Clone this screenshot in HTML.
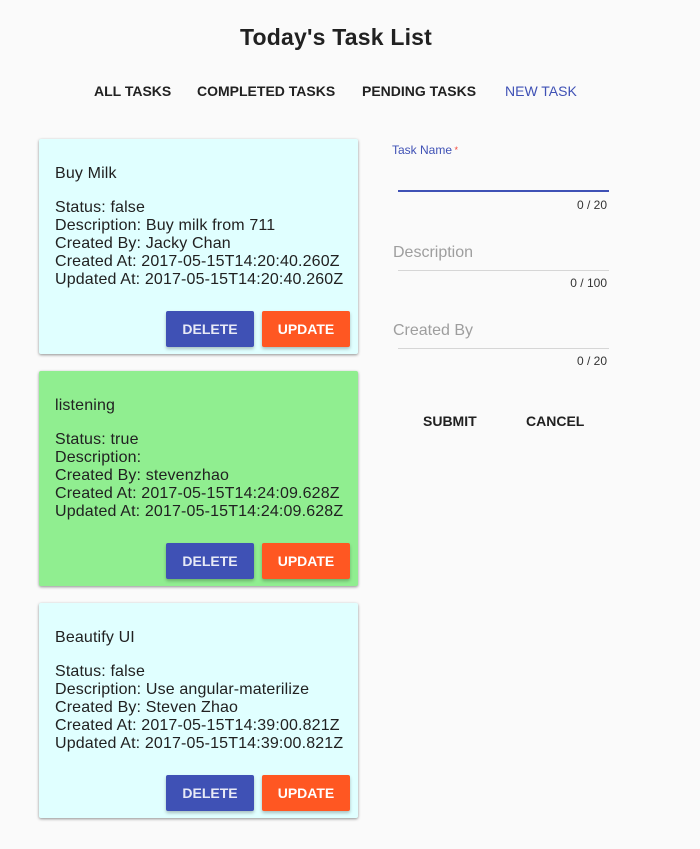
<!DOCTYPE html>
<html><head><meta charset="utf-8"><style>
body{margin:0;background:#fafafa;font-family:"Liberation Sans",Arial,sans-serif;color:#212121;width:700px;height:849px;position:relative;overflow:hidden}
.abs{position:absolute}
h1{position:absolute;top:22px;left:0;width:672px;text-align:center;margin:0;font-size:23px;font-weight:bold;line-height:30px;letter-spacing:0.2px}
.nav{top:82px;font-size:14px;font-weight:bold;line-height:18px;color:#212121}
.card{position:absolute;left:39px;width:319px;height:215px;box-shadow:0 1px 3px rgba(0,0,0,.25),0 1px 2px rgba(0,0,0,.2);border-radius:2px}
.card .t{position:absolute;left:16px;top:26px;font-size:16px;line-height:18px;letter-spacing:0.15px}
.card .b{position:absolute;left:16px;top:60px;font-size:16px;line-height:18px;letter-spacing:0.15px}
.btn{position:absolute;top:172px;height:36px;width:88px;border-radius:2px;color:#fff;font-size:14px;font-weight:bold;line-height:36px;text-align:center;box-shadow:0 2px 3px rgba(0,0,0,.25)}
.del{left:127px;background:#3f51b5;color:#e8eaf6}
.upd{left:223px;background:#ff5722}
.line{position:absolute;left:398px;width:211px;height:1px;background:#d6d6d6}
.cnt{position:absolute;right:93px;font-size:12px;line-height:14px;color:#333}
.ph{position:absolute;left:393px;font-size:16px;color:#9e9e9e;line-height:20px}
</style></head><body>
<h1>Today's Task List</h1>
<div class="abs nav" style="left:94px">ALL TASKS</div>
<div class="abs nav" style="left:197px">COMPLETED TASKS</div>
<div class="abs nav" style="left:362px">PENDING TASKS</div>
<div class="abs nav" style="left:505px;color:#3f51b5;font-weight:normal">NEW TASK</div>

<div class="card" style="top:139px;background:#e0ffff"><div class="t">Buy Milk</div><div class="b">Status: false<br>Description: Buy milk from 711<br>Created By: Jacky Chan<br>Created At: 2017-05-15T14:20:40.260Z<br>Updated At: 2017-05-15T14:20:40.260Z</div><div class="btn del">DELETE</div><div class="btn upd">UPDATE</div></div>
<div class="card" style="top:371px;background:#90ee90"><div class="t">listening</div><div class="b">Status: true<br>Description:<br>Created By: stevenzhao<br>Created At: 2017-05-15T14:24:09.628Z<br>Updated At: 2017-05-15T14:24:09.628Z</div><div class="btn del">DELETE</div><div class="btn upd">UPDATE</div></div>
<div class="card" style="top:603px;background:#e0ffff"><div class="t">Beautify UI</div><div class="b">Status: false<br>Description: Use angular-materilize<br>Created By: Steven Zhao<br>Created At: 2017-05-15T14:39:00.821Z<br>Updated At: 2017-05-15T14:39:00.821Z</div><div class="btn del">DELETE</div><div class="btn upd">UPDATE</div></div>

<div class="abs" style="left:392px;top:143px;font-size:12px;color:#3f51b5;line-height:14px">Task Name<span style="color:#f44336;font-size:9px;vertical-align:top"> *</span></div>
<div class="line" style="top:190px;height:2px;background:#3f51b5"></div>
<div class="cnt" style="top:198px">0 / 20</div>
<div class="ph" style="top:243px">Description</div>
<div class="line" style="top:270px"></div>
<div class="cnt" style="top:276px">0 / 100</div>
<div class="ph" style="top:321px">Created By</div>
<div class="line" style="top:348px"></div>
<div class="cnt" style="top:354px">0 / 20</div>
<div class="abs nav" style="left:423px;top:412px">SUBMIT</div>
<div class="abs nav" style="left:526px;top:412px">CANCEL</div>
</body></html>
